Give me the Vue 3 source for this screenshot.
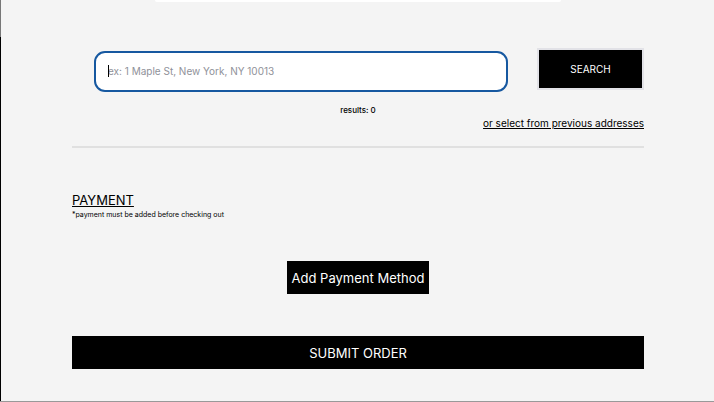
<script setup>
import { ref } from 'vue'

const address = ref('')
const resultCount = ref(0)
</script>

<template>
  <main class="page">
    <div class="card-edge"></div>

    <form class="search" @submit.prevent>
      <div class="field">
        <input
          v-model="address"
          class="address"
          type="text"
          aria-label="Address"
          placeholder="ex: 1 Maple St, New York, NY 10013"
        />
        <span v-if="!address" class="caret"></span>
      </div>
      <button class="search-button" type="submit">SEARCH</button>
    </form>

    <p class="results">results: {{ resultCount }}</p>
    <a class="previous" href="#">or select from previous addresses</a>
    <hr class="divider" />

    <section class="payment">
      <h2 class="title">PAYMENT</h2>
      <p class="note">*payment must be added before checking out</p>
      <button class="add" type="button">Add Payment Method</button>
    </section>

    <button class="submit" type="button">SUBMIT ORDER</button>
  </main>
</template>

<style>
body {
  background: #f4f4f4;
}
</style>

<style scoped>
.page {
  box-sizing: border-box;
  display: flex;
  flex-direction: column;
  min-height: 100vh;
  padding: 0 70px 32px 72px;
  border-bottom: 1px solid #999;
  background: linear-gradient(#777 37px, #000 37px) 0 0 / 1px 100% no-repeat, #f4f4f4;
  color: #000;
  font-family: Inter, "Liberation Sans", sans-serif;
}

.card-edge {
  align-self: center;
  width: 71%;
  height: 2px;
  border-radius: 0 0 4px 4px;
  background: #fff;
}

.search {
  display: flex;
  align-items: flex-start;
  gap: 29px;
  margin-top: 46px;
  padding-left: 22px;
}

.field {
  position: relative;
  flex: 1;
  padding-top: 3px;
}

.address {
  box-sizing: border-box;
  display: block;
  width: 100%;
  height: 41px;
  padding: 0 12px 2px;
  border: 2px solid #1658a0;
  border-radius: 11px;
  outline: none;
  background: #fff;
  font-family: inherit;
  font-size: 10px;
  color: #000;
}

.address::placeholder {
  color: #8f9199;
  opacity: 1;
}

.caret {
  position: absolute;
  top: 17px;
  left: 14px;
  width: 1px;
  height: 12px;
  background: #000;
}

button {
  border: 0;
  border-radius: 0;
  background: #000;
  color: #fff;
  font-family: inherit;
  cursor: pointer;
}

.search-button {
  width: 107px;
  height: 42px;
  padding: 0;
  border: 2px solid #e2e2e7;
  font-size: 10px;
}

.results {
  margin: 12px 0 0;
  text-align: center;
  font-size: 8px;
  font-weight: 500;
  line-height: 12px;
}

.previous {
  align-self: flex-end;
  color: inherit;
  font-size: 10px;
  line-height: 14px;
}

.divider {
  width: 100%;
  height: 2px;
  margin: 16px 0 0;
  border: 0;
  background: #e0e0e0;
}

.payment {
  display: flex;
  flex-direction: column;
  margin-top: 43px;
}

.title {
  margin: 0;
  font-size: 13px;
  font-weight: 400;
  line-height: 18px;
  text-decoration: underline;
}

.note {
  margin: 1px 0 0;
  font-size: 7px;
  line-height: 10px;
}

.add {
  align-self: center;
  height: 33px;
  margin-top: 41px;
  padding: 0 5px 0;
  font-size: 13px;
}

.submit {
  height: 33px;
  margin-top: 42px;
  padding: 0;
  font-size: 13px;
}
</style>
